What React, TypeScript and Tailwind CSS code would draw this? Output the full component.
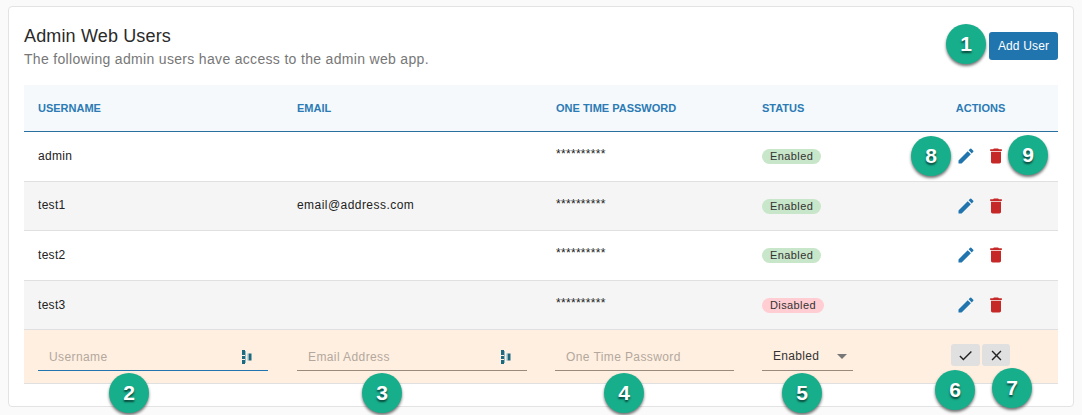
import React from "react";

const Badge = ({ n, className }: { n: number; className: string }) => (
  <div
    className={`absolute flex h-[40px] w-[40px] items-center justify-center rounded-full bg-[#17ae8c] text-[21px] font-bold text-white shadow-[0_2px_3px_rgba(0,0,0,0.55)] [text-shadow:0_2px_2px_rgba(0,0,0,0.6)] ${className}`}
  >
    {n}
  </div>
);

const Pencil = () => (
  <svg width="20" height="20" viewBox="0 0 24 24" fill="#2175ae">
    <path d="M3 17.25V21h3.75L17.81 9.94l-3.75-3.75L3 17.25zM20.71 7.04a1 1 0 0 0 0-1.41l-2.34-2.34a1 1 0 0 0-1.41 0l-1.83 1.83 3.75 3.75 1.83-1.83z" />
  </svg>
);

const Trash = () => (
  <svg width="20" height="20" viewBox="0 0 24 24" fill="#c62828">
    <path d="M6 19c0 1.1.9 2 2 2h8c1.1 0 2-.9 2-2V7H6v12zM19 4h-3.5l-1-1h-5l-1 1H5v2h14V4z" />
  </svg>
);

const Key = () => (
  <svg width="10" height="14" viewBox="0 0 10 14" className="absolute right-[16px] top-[7px]">
    <rect x="0" y="0" width="3" height="5" fill="#1d6a80" />
    <rect x="0" y="6" width="3" height="3" fill="#1d6a80" />
    <rect x="0" y="10" width="3" height="4" fill="#1d6a80" />
    <rect x="3" y="1" width="1" height="12" fill="#8fbcc6" />
    <rect x="6.5" y="3.5" width="3" height="7" fill="#1d6a80" />
    <rect x="5.5" y="3.5" width="1" height="7" fill="#8fbcc6" />
  </svg>
);

const Status = ({ on }: { on: boolean }) => (
  <span
    className={`inline-flex h-[15px] items-center rounded-full px-[8px] text-[11px] tracking-[0.4px] text-[#333] ${on ? "bg-[#c8e6c9]" : "bg-[#ffcdd2]"}`}
  >
    {on ? "Enabled" : "Disabled"}
  </span>
);

const cols = "grid grid-cols-[259px_259px_206px_152px_158px]";

const Row = ({ name, email, on, alt, up }: { name: string; email?: string; on: boolean; alt?: boolean; up?: boolean }) => (
  <div className={`${cols} h-[49.5px] items-center border-b border-[#e0e0e0] text-[12px] text-[#222] ${alt ? "bg-[#f5f5f5]" : "bg-white"}`}>
    <div className={`pl-[14px] tracking-[0.3px] ${up ? "pb-[2px]" : ""}`}>{name}</div>
    <div className={`pl-[14px] tracking-[0.45px] ${up ? "pb-[2px]" : ""}`}>{email}</div>
    <div className="pl-[14px] pb-[4px] tracking-[0.3px]">**********</div>
    <div className="pl-[14px]"><Status on={on} /></div>
    <div className="flex justify-center gap-[10px] pl-[4px]"><Pencil /><Trash /></div>
  </div>
);

const Field = ({ placeholder, active, key_, className }: { placeholder: string; active?: boolean; key_?: boolean; className: string }) => (
  <div className={`relative h-[28px] border-b pl-[11px] pt-[5px] text-[12px] tracking-[0.4px] text-[#b3a89d] ${active ? "border-[#2175ae]" : "border-[#9a8a7e]"} ${className}`}>
    {placeholder}
    {key_ && <Key />}
  </div>
);

export default function App() {
  return (
    <div className="h-[415px] w-[1082px] bg-[#fafafa] pl-[8px] pt-[6px] font-['Liberation_Sans',Arial,sans-serif]">
      <div className="relative h-[401px] w-[1066px] rounded-[4px] border border-[#e3e3e3] bg-white pl-[15px] pr-[15px]">
        <div className="flex h-[78px] items-start justify-between">
          <div className="pt-[18px]">
            <div className="text-[18px] leading-[22px] tracking-[0.15px] text-[#2a2a2a]">Admin Web Users</div>
            <div className="mt-[3px] text-[14px] leading-[18px] tracking-[0.32px] text-[#777]">The following admin users have access to the admin web app.</div>
          </div>
          <button className="mt-[25px] h-[28px] w-[69px] rounded-[3px] bg-[#2175ae] text-[12px] tracking-[0.15px] text-white">Add User</button>
        </div>

        <div className={`${cols} h-[47px] items-center border-b border-[#2a6f9f] bg-[#f5f9fc] text-[11px] font-bold text-[#2b7bb5]`}>
          <div className="pl-[14px]">USERNAME</div>
          <div className="pl-[14px]">EMAIL</div>
          <div className="pl-[14px]">ONE TIME PASSWORD</div>
          <div className="pl-[14px]">STATUS</div>
          <div className="pl-[3px] text-center">ACTIONS</div>
        </div>

        <Row name="admin" on />
        <Row name="test1" email="email@address.com" on alt up />
        <Row name="test2" on />
        <Row name="test3" on={false} alt />

        <div className={`${cols} h-[54px] items-start border-b border-[#e0e0e0] bg-[#ffefe1] pt-[13px]`}>
          <div className="pl-[14px]"><Field placeholder="Username" active key_ className="w-[230px]" /></div>
          <div className="pl-[14px]"><Field placeholder="Email Address" key_ className="w-[230px]" /></div>
          <div className="pl-[13px]"><Field placeholder="One Time Password" className="w-[179px]" /></div>
          <div className="pl-[14px]">
            <div className="relative h-[28px] w-[91px] border-b border-[#9a8a7e] pl-[11px] pt-[4px] text-[12px] tracking-[0.3px] text-[#333]">
              Enabled
              <div className="absolute right-[6px] top-[11px] h-0 w-0 border-x-[5px] border-t-[5px] border-x-transparent border-t-[#777]" />
            </div>
          </div>
          <div className="flex justify-center gap-[2px] pl-[3px] pt-[1px]">
            <div className="flex h-[22px] w-[29px] items-center justify-center rounded-[3px] bg-[#e0e0e0]">
              <svg width="17" height="17" viewBox="0 0 24 24" fill="#222"><path d="M9 16.17 4.83 12l-1.42 1.41L9 19 21 7l-1.41-1.41z" /></svg>
            </div>
            <div className="flex h-[22px] w-[28px] items-center justify-center rounded-[3px] bg-[#e0e0e0]">
              <svg width="17" height="17" viewBox="0 0 24 24" fill="#222"><path d="M19 6.41 17.59 5 12 10.59 6.41 5 5 6.41 10.59 12 5 17.59 6.41 19 12 13.41 17.59 19 19 17.59 13.41 12z" /></svg>
            </div>
          </div>
        </div>

        <Badge n={1} className="left-[937px] top-[17px]" />
        <Badge n={8} className="left-[902px] top-[129px]" />
        <Badge n={9} className="left-[999px] top-[128px]" />
        <Badge n={2} className="left-[100px] top-[366px]" />
        <Badge n={3} className="left-[353px] top-[366px]" />
        <Badge n={4} className="left-[595px] top-[366px]" />
        <Badge n={5} className="left-[773px] top-[366px]" />
        <Badge n={6} className="left-[926px] top-[363px]" />
        <Badge n={7} className="left-[983px] top-[361px]" />
      </div>
    </div>
  );
}
